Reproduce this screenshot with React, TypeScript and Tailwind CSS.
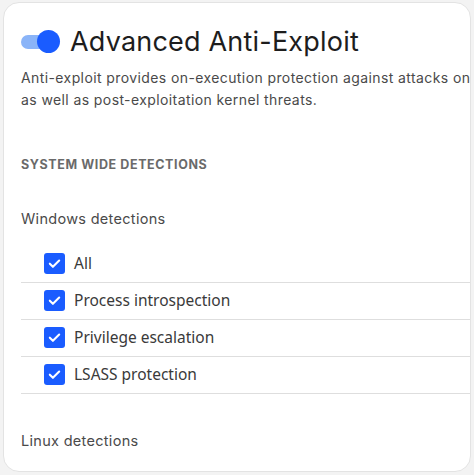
import React from 'react';

const items = ['All', 'Process introspection', 'Privilege escalation', 'LSASS protection'];

function CheckBox() {
  return (
    <span className="flex h-[21px] w-[21px] shrink-0 items-center justify-center rounded-[3px] bg-[#1a5cff]">
      <svg width="15" height="15" viewBox="0 0 16 16" fill="none">
        <path d="M3 8.2l3.3 3.3L13 4.8" stroke="white" strokeWidth="2.2" strokeLinecap="round" strokeLinejoin="round" />
      </svg>
    </span>
  );
}

export default function App() {
  return (
    <div className="h-[475px] w-[474px] overflow-hidden bg-[#f3f3f3] pl-[3px] pt-[2px]" style={{ fontFamily: 'Inter, "Noto Sans", sans-serif' }}>
      <div className="h-[470px] w-[468px] overflow-hidden rounded-[16px] border border-[#e3e3e3] bg-white pl-[17px] pt-[23px]">
        <div className="flex items-center gap-[9px]">
          <div className="relative h-[24px] w-[40px]">
            <div className="absolute left-[0px] top-[5px] h-[14px] w-[34px] rounded-full bg-[#8ab4f8]" />
            <div className="absolute left-[16px] top-[0px] h-[23px] w-[23px] rounded-full bg-[#1a5cff]" />
          </div>
          <h1 className="text-[27px] leading-[32px] font-normal tracking-[0.2px] text-[#1d1d1d]">Advanced Anti-Exploit</h1>
        </div>
        <p className="mt-[9px] w-[456px] text-[14px] leading-[22px] tracking-[0.4px] text-[#4a4a4a]">
          Anti-exploit provides on-execution protection against attacks on as well as post-exploitation kernel threats.
        </p>
        <div className="mt-[45px] text-[12.5px] font-bold uppercase tracking-[0.6px] text-[#6a6a6a]">System wide detections</div>
        <div className="mt-[33px] text-[14.5px] tracking-[0.3px] text-[#4a4a4a]">Windows detections</div>
        <ul className="mt-[16px] w-[450px]" style={{ fontFamily: '"Noto Sans", sans-serif' }}>
          {items.map(it => (
            <li key={it} className="flex h-[37px] items-center gap-[9px] border-b border-[#dedede] pl-[23px] text-[15.5px] text-[#3a3a3a]">
              <CheckBox />
              <span>{it}</span>
            </li>
          ))}
        </ul>
        <div className="mt-[36px] text-[14.5px] tracking-[0.3px] text-[#4a4a4a]">Linux detections</div>
      </div>
    </div>
  );
}
